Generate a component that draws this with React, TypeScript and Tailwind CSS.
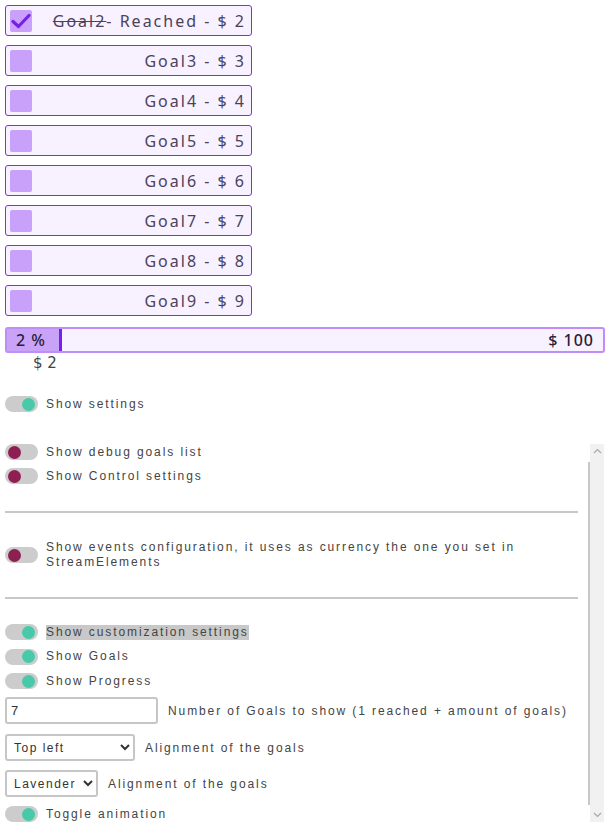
import React from 'react';

const goals = [
  { name: 'Goal2', amount: 2, reached: true },
  { name: 'Goal3', amount: 3 },
  { name: 'Goal4', amount: 4 },
  { name: 'Goal5', amount: 5 },
  { name: 'Goal6', amount: 6 },
  { name: 'Goal7', amount: 7 },
  { name: 'Goal8', amount: 8 },
  { name: 'Goal9', amount: 9 },
];

const labelFont = { fontFamily: '"Liberation Sans", Arial, sans-serif' };

const Switch = ({ on }: { on: boolean }) => (
  <div className={`w-[33px] h-[16px] rounded-full bg-[#cccccc] flex items-center px-[3px] shrink-0 ${on ? 'justify-end' : 'justify-start'}`}>
    <div className={`w-[13px] h-[13px] rounded-full ${on ? 'bg-[#48c9a9]' : 'bg-[#8e1f52]'}`} />
  </div>
);

const Toggle = ({ on, label, highlight }: { on: boolean; label: React.ReactNode; highlight?: boolean }) => (
  <div className="flex items-center gap-2 h-4">
    <Switch on={on} />
    <span
      className={`text-[12px] tracking-[1.9px] text-[#444] leading-[15px] ${highlight ? 'bg-[#c8c8c8]' : ''}`}
      style={labelFont}
    >
      {label}
    </span>
  </div>
);

const Chevron = ({ up }: { up?: boolean }) => (
  <svg width="9" height="6" viewBox="0 0 9 6">
    <polyline
      points={up ? '1,5 4.5,1.5 8,5' : '1,1 4.5,4.5 8,1'}
      fill="none"
      stroke="#a8a8a8"
      strokeWidth="1.2"
    />
  </svg>
);

const ScrollBar = () => (
  <div className="w-[16px] shrink-0 flex">
    <div className="w-[2px] flex flex-col pt-[18px] pb-[17px]">
      <div className="flex-1 bg-[#c8c8c8]" />
    </div>
    <div className="flex-1 bg-[#f1f1f1] flex flex-col items-center justify-between py-[4px]">
      <Chevron up />
      <Chevron />
    </div>
  </div>
);

export default function App() {
  return (
    <div className="bg-white min-h-[837px] px-[5px] pt-[5px]">
      <div className="flex flex-col gap-[9px] w-[247px]" style={{ fontFamily: '"Noto Sans", sans-serif' }}>
        {goals.map((g) => (
          <div
            key={g.name}
            className="h-[31px] border border-[#8a2be2] bg-[#f8f1ff] rounded-[3px] flex items-center pl-[4px] pr-[5px]"
          >
            <div className="w-[22px] h-[22px] rounded-[2px] bg-[#c9a1fb] flex items-center justify-center shrink-0">
              {g.reached && (
                <svg width="20" height="16" viewBox="0 0 20 16">
                  <path d="M2 8.5 L7.5 13.5 L18 2.5" fill="none" stroke="#7a1fe6" strokeWidth="3.2" strokeLinecap="round" strokeLinejoin="round" />
                </svg>
              )}
            </div>
            <div className="flex-1 text-right text-[16px] tracking-[2px] text-[#4b4259] leading-none">
              {g.reached ? (
                <>
                  <span className="line-through">{g.name}</span>- Reached - $ {g.amount}
                </>
              ) : (
                <>{g.name} - $ {g.amount}</>
              )}
            </div>
          </div>
        ))}
      </div>

      <div className="mt-[11px] w-[600px] h-[26px] border-2 border-[#bf8df5] rounded-[3px] bg-[#f8f1ff] flex items-stretch" style={{ fontFamily: '"Noto Sans", sans-serif' }}>
        <div className="w-[55px] bg-[#c9a3f8] border-r-[3px] border-[#7a1ff0] flex items-center pl-[9px] text-[16px] font-medium tracking-[1px] text-[#2a1d3a]">
          2 %
        </div>
        <div className="flex-1 flex items-center justify-end pr-[9px] text-[16px] font-medium tracking-[1px] text-[#2a1d3a]">
          $ 100
        </div>
      </div>
      <div className="pl-[28px] text-[15px] text-[#444] leading-[20px]" style={{ fontFamily: '"DejaVu Sans", sans-serif' }}>
        $ 2
      </div>

      <div className="mt-[23px]">
        <Toggle on label="Show settings" />
      </div>

      <div className="mt-[32px] h-[378px] w-[599px] flex">
        <div className="flex-1 overflow-hidden pr-[10px] flex flex-col">
          <div className="flex flex-col gap-[8px]">
            <Toggle on={false} label="Show debug goals list" />
            <Toggle on={false} label="Show Control settings" />
          </div>
          <hr className="mt-[27px] border-0 h-[2px] bg-[#c8c8c8] shrink-0" />
          <div className="flex items-center gap-2 mt-[27px]">
            <Switch on={false} />
            <span className="text-[12px] tracking-[1.9px] text-[#444] leading-[15px]" style={labelFont}>
              Show events configuration, it uses as currency the one you set in StreamElements
            </span>
          </div>
          <hr className="mt-[27px] border-0 h-[2px] bg-[#c8c8c8] shrink-0" />
          <div className="mt-[25px] flex flex-col gap-[8.5px]">
            <Toggle on highlight label="Show customization settings" />
            <Toggle on label="Show Goals" />
            <Toggle on label="Show Progress" />
          </div>
          <div className="flex items-center gap-[10px] mt-[8px] shrink-0">
            <input
              defaultValue="7"
              className="w-[153px] h-[27px] border-2 border-[#c6c6c6] rounded-[3px] px-[4px] text-[13px] text-[#333] outline-none"
              style={labelFont}
            />
            <span className="text-[12px] tracking-[1.9px] text-[#444]" style={labelFont}>
              Number of Goals to show (1 reached + amount of goals)
            </span>
          </div>
          <div className="flex items-center gap-[10px] mt-[10px] shrink-0">
            <select
              defaultValue="tl"
              className="w-[130px] h-[27px] border-2 border-[#c6c6c6] rounded-[3px] pl-[3px] text-[12px] tracking-[1.5px] text-[#333] bg-white"
              style={labelFont}
            >
              <option value="tl">Top left</option>
            </select>
            <span className="text-[12px] tracking-[1.9px] text-[#444]" style={labelFont}>
              Alignment of the goals
            </span>
          </div>
          <div className="flex items-center gap-[10px] mt-[9px] shrink-0">
            <select
              defaultValue="lav"
              className="w-[93px] h-[27px] border-2 border-[#c6c6c6] rounded-[3px] pl-[3px] text-[12px] tracking-[1.5px] text-[#333] bg-white"
              style={labelFont}
            >
              <option value="lav">Lavender</option>
            </select>
            <span className="text-[12px] tracking-[1.9px] text-[#444]" style={labelFont}>
              Alignment of the goals
            </span>
          </div>
          <div className="mt-[9px] shrink-0">
            <Toggle on label="Toggle animation" />
          </div>
        </div>
        <ScrollBar />
      </div>
    </div>
  );
}
